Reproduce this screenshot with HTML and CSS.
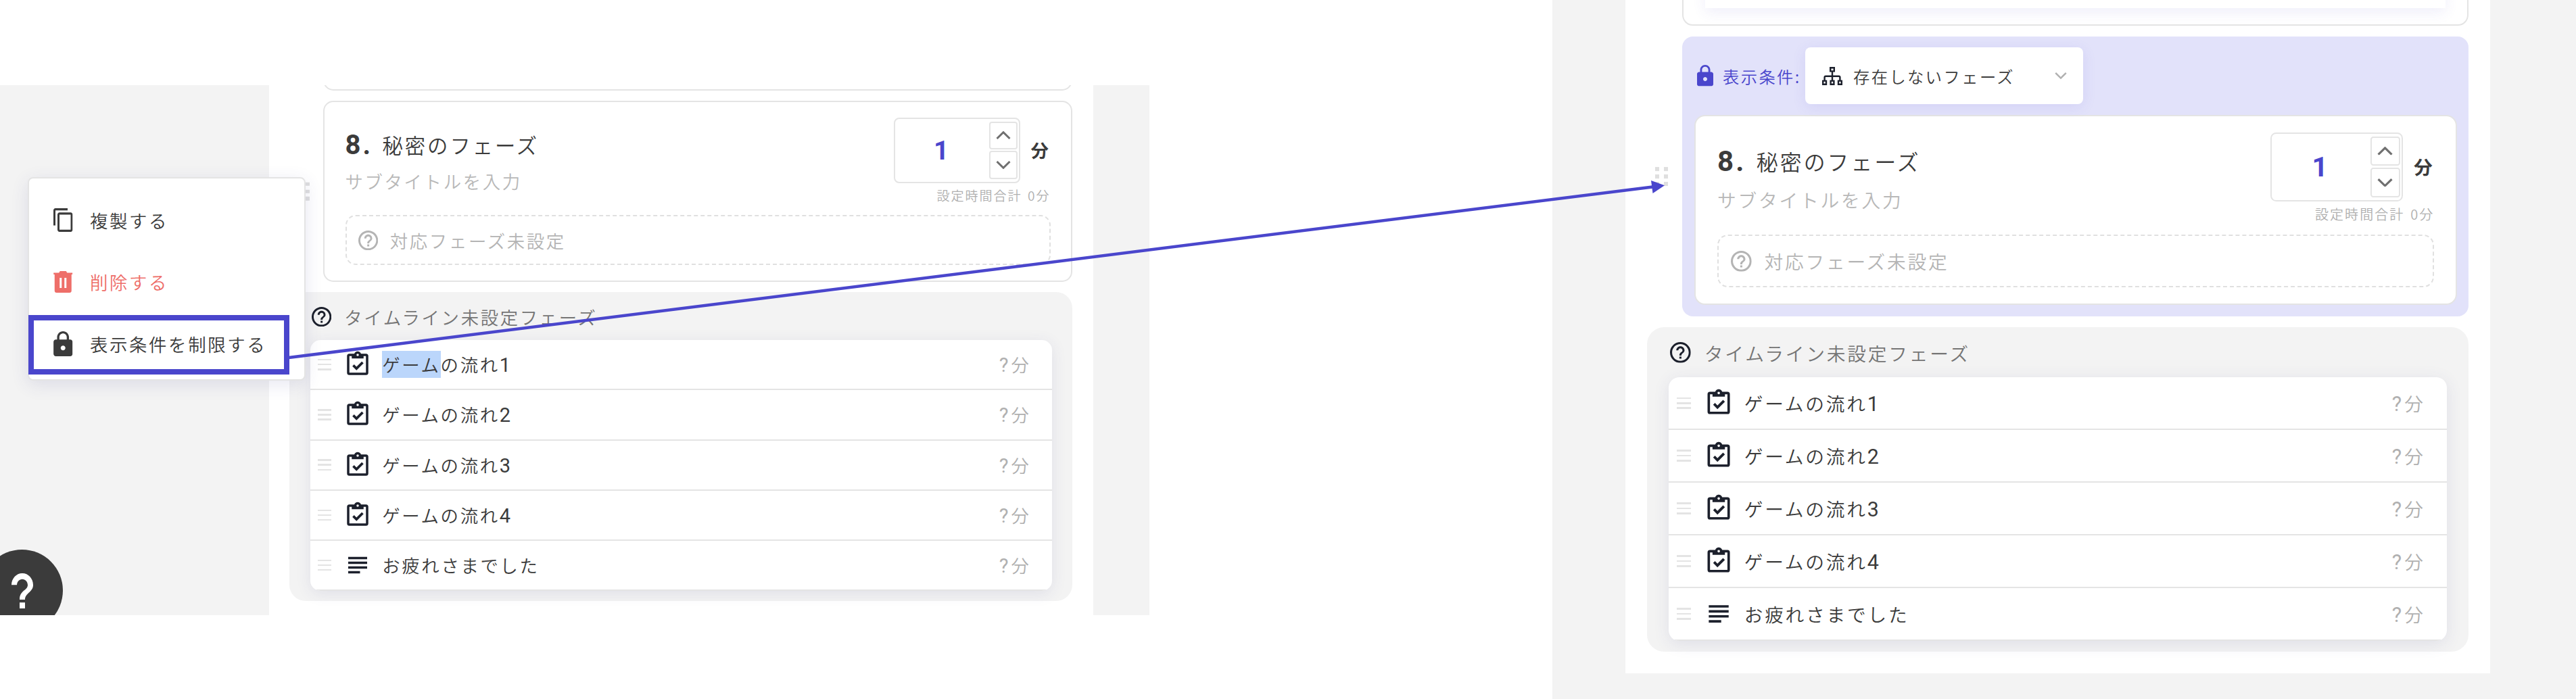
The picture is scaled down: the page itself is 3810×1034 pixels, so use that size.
FILE: index.html
```html
<!DOCTYPE html>
<html lang="ja">
<head>
<meta charset="utf-8">
<title>フェーズ編集</title>
<link rel="stylesheet" href="styles.css">
</head>
<body>
<svg class="defs" width="0" height="0">
  <symbol id="help" viewBox="2 2 20 20"><path d="M11 18h2v-2h-2v2zm1-16C6.48 2 2 6.48 2 12s4.48 10 10 10 10-4.48 10-10S17.52 2 12 2zm0 18c-4.41 0-8-3.59-8-8s3.59-8 8-8 8 3.59 8 8-3.59 8-8 8zm0-14c-2.21 0-4 1.79-4 4h2c0-1.1.9-2 2-2s2 .9 2 2c0 2-3 1.75-3 5h2c0-2.25 3-2.5 3-5 0-2.21-1.79-4-4-4z"/></symbol>
  <symbol id="question" viewBox="8 6 8 12" preserveAspectRatio="none"><path d="M11 18h2v-2h-2v2zm1-12c-2.21 0-4 1.79-4 4h2c0-1.1.9-2 2-2s2 .9 2 2c0 2-3 1.75-3 5h2c0-2.25 3-2.5 3-5 0-2.21-1.79-4-4-4z"/></symbol>
  <symbol id="task" viewBox="0 0 24 24"><path d="M19,3H14.82C14.4,1.84 13.3,1 12,1C10.7,1 9.6,1.84 9.18,3H5A2,2 0 0,0 3,5V19A2,2 0 0,0 5,21H19A2,2 0 0,0 21,19V5A2,2 0 0,0 19,3M12,3A1,1 0 0,1 13,4A1,1 0 0,1 12,5A1,1 0 0,1 11,4A1,1 0 0,1 12,3M7,7H17V5H19V19H5V5H7V7M7.5,13.5L9,12L11,14L15.5,9.5L17,11L11,17L7.5,13.5Z"/></symbol>
  <symbol id="text" viewBox="0 0 24 24"><path d="M14 17H4v2h10v-2zm6-8H4v2h16V9zM4 15h16v-2H4v2zM4 5v2h16V5H4z"/></symbol>
  <symbol id="lock" viewBox="4 1 16 21"><path d="M18 8h-1V6c0-2.76-2.24-5-5-5S7 3.24 7 6v2H6c-1.1 0-2 .9-2 2v10c0 1.1.9 2 2 2h12c1.1 0 2-.9 2-2V10c0-1.1-.9-2-2-2zm-6 9c-1.1 0-2-.9-2-2s.9-2 2-2 2 .9 2 2-.9 2-2 2zm3.1-9H8.9V6c0-1.71 1.39-3.1 3.1-3.1s3.1 1.39 3.1 3.1v2z"/></symbol>
  <symbol id="copy" viewBox="2 1 19 22" preserveAspectRatio="none"><path d="M16 1H4c-1.1 0-2 .9-2 2v14h2V3h12V1zm3 4H8c-1.1 0-2 .9-2 2v14c0 1.1.9 2 2 2h11c1.1 0 2-.9 2-2V7c0-1.100-.9-2-2-2zm0 16H8V7h11v14z"/></symbol>
  <symbol id="trash" viewBox="0 0 28 32"><path fill-rule="evenodd" d="M0 2.500h8L9.500 0h9L20 2.500h8V5h-1.500v24a3 3 0 0 1-3 3h-19a3 3 0 0 1-3-3V5H0zM9 10v15h3V10zm7 0v15h3V10z"/></symbol>
  <symbol id="up" viewBox="0 0 22 12"><path d="M1.500 11 11 1.700 20.500 11" fill="none" stroke="currentColor" stroke-width="3"/></symbol>
  <symbol id="down" viewBox="0 0 22 12"><path d="M1.500 1 11 10.300 20.500 1" fill="none" stroke="currentColor" stroke-width="3"/></symbol>
  <symbol id="tree" viewBox="0 0 30 27"><path fill="none" stroke="currentColor" stroke-width="2.400" d="M12.200 1.200h5.600v5.200h-5.600zM1.200 20.600h4.800v5.200H1.200zM12.600 20.600h4.800v5.200h-4.800zM24 20.600h4.800v5.200H24zM15 6.400v14.200M3.600 20.600v-5.200q0-1.700 1.700-1.700h19.400q1.700 0 1.700 1.700v5.200"/></symbol>
</svg>

<main class="board">
  <section class="screen screen-before">
    <div class="column">
      <div class="card card-previous"></div>
      <div class="slot">
        <div class="dots"><i></i><i></i><i></i><i></i><i></i><i></i></div>
        <article class="card phase">
          <div class="phase-top">
            <div class="phase-names">
              <h2><b>8.</b>秘密のフェーズ</h2>
              <p>サブタイトルを入力</p>
            </div>
            <div class="phase-time">
              <div class="time-row">
                <div class="stepper"><span>1</span><div class="steps"><div><svg><use href="#up"/></svg></div><div><svg><use href="#down"/></svg></div></div></div>
                <strong>分</strong>
              </div>
              <small>設定時間合計 0分</small>
            </div>
          </div>
          <div class="unset"><svg><use href="#help"/></svg>対応フェーズ未設定</div>
        </article>
      </div>
      <section class="group">
        <h3><svg><use href="#help"/></svg>タイムライン未設定フェーズ</h3>
        <ul>
          <li><div class="grip"><i></i><i></i><i></i></div><svg><use href="#task"/></svg><span><mark>ゲーム</mark>の流れ<b>1</b></span><em><b>?</b>分</em></li>
          <li><div class="grip"><i></i><i></i><i></i></div><svg><use href="#task"/></svg><span>ゲームの流れ<b>2</b></span><em><b>?</b>分</em></li>
          <li><div class="grip"><i></i><i></i><i></i></div><svg><use href="#task"/></svg><span>ゲームの流れ<b>3</b></span><em><b>?</b>分</em></li>
          <li><div class="grip"><i></i><i></i><i></i></div><svg><use href="#task"/></svg><span>ゲームの流れ<b>4</b></span><em><b>?</b>分</em></li>
          <li><div class="grip"><i></i><i></i><i></i></div><svg><use href="#text"/></svg><span>お疲れさまでした</span><em><b>?</b>分</em></li>
        </ul>
      </section>
    </div>
    <nav class="menu">
      <div class="item"><svg class="i-copy"><use href="#copy"/></svg>複製する</div>
      <div class="item danger"><svg class="i-trash"><use href="#trash"/></svg>削除する</div>
      <div class="item"><svg class="i-lock"><use href="#lock"/></svg>表示条件を制限する</div>
    </nav>
    <div class="help-button"><svg><use href="#question"/></svg></div>
  </section>

  <section class="screen screen-after">
    <div class="column">
      <div class="card card-previous"><div class="previous-body"></div></div>
      <div class="slot restricted">
        <div class="dots"><i></i><i></i><i></i><i></i><i></i><i></i></div>
        <div class="condition">
          <svg class="i-lock"><use href="#lock"/></svg><span>表示条件:</span>
          <div class="select"><svg class="i-tree"><use href="#tree"/></svg>存在しないフェーズ<svg class="i-down"><use href="#down"/></svg></div>
        </div>
        <article class="card phase">
          <div class="phase-top">
            <div class="phase-names">
              <h2><b>8.</b>秘密のフェーズ</h2>
              <p>サブタイトルを入力</p>
            </div>
            <div class="phase-time">
              <div class="time-row">
                <div class="stepper"><span>1</span><div class="steps"><div><svg><use href="#up"/></svg></div><div><svg><use href="#down"/></svg></div></div></div>
                <strong>分</strong>
              </div>
              <small>設定時間合計 0分</small>
            </div>
          </div>
          <div class="unset"><svg><use href="#help"/></svg>対応フェーズ未設定</div>
        </article>
      </div>
      <section class="group">
        <h3><svg><use href="#help"/></svg>タイムライン未設定フェーズ</h3>
        <ul>
          <li><div class="grip"><i></i><i></i><i></i></div><svg><use href="#task"/></svg><span>ゲームの流れ<b>1</b></span><em><b>?</b>分</em></li>
          <li><div class="grip"><i></i><i></i><i></i></div><svg><use href="#task"/></svg><span>ゲームの流れ<b>2</b></span><em><b>?</b>分</em></li>
          <li><div class="grip"><i></i><i></i><i></i></div><svg><use href="#task"/></svg><span>ゲームの流れ<b>3</b></span><em><b>?</b>分</em></li>
          <li><div class="grip"><i></i><i></i><i></i></div><svg><use href="#task"/></svg><span>ゲームの流れ<b>4</b></span><em><b>?</b>分</em></li>
          <li><div class="grip"><i></i><i></i><i></i></div><svg><use href="#text"/></svg><span>お疲れさまでした</span><em><b>?</b>分</em></li>
        </ul>
      </section>
    </div>
  </section>

  <div class="focus-box"></div>
  <svg class="arrow" viewBox="0 0 3810 1034"><path d="M427 529 2446 276.200" fill="none" stroke="#4a46cc" stroke-width="4.500"/><path d="M2442 267 2462 274.300 2444.500 286z" fill="#4a46cc"/></svg>
</main>
</body>
</html>
```
FILE: styles.css
```css
* { box-sizing: border-box; }
body {
  margin: 0;
  background: #fff;
  color: #3b3b3b;
  font-family: "Noto Sans CJK JP", sans-serif;
  font-weight: 350;
}
h2, h3, p, ul { margin: 0; padding: 0; font-weight: inherit; }
svg { display: block; fill: currentColor; flex: none; }
.defs { position: absolute; }

.board {
  position: relative;
  display: flex;
  align-items: flex-start;
  justify-content: space-between;
  width: 3810px;
  height: 1034px;
  overflow: hidden;
}

/* Both screens share one layout; --u is the size of its unit. */
.screen {
  position: relative;
  background: #f3f3f3;
  overflow: hidden;
  font-size: calc(26.400 * var(--u));
  letter-spacing: calc(2.640 * var(--u));
}
.screen-before { --u: 1px; width: 1700px; height: 784px; margin-top: 126px; padding-left: 398px; }
.screen-after { --u: 1.05px; width: 1514px; height: 1034px; padding-left: 108px; }
.column {
  width: calc(1218.500 * var(--u));
  padding: 0 calc(30.500 * var(--u)) 0 calc(30 * var(--u));
  background: #fff;
  overflow: hidden;
}
.screen-before .column { height: 784px; }
.screen-after .column { height: 996px; }

.card {
  background: #fff;
  border: 2px solid #e4e4e4;
  border-radius: calc(15 * var(--u));
}
.card-previous { margin-left: calc(50 * var(--u)); height: 60px; }
.screen-before .card-previous { margin-top: -52px; }
.screen-after .card-previous { margin-top: -22px; padding: 0 32px 24px; }
.previous-body { height: 100%; box-shadow: 0 6px 20px rgba(74, 70, 204, .09); }

.slot { position: relative; margin: calc(15.200 * var(--u)) 0 calc(15 * var(--u)) calc(50 * var(--u)); }
.dots {
  position: absolute;
  left: calc(-38 * var(--u));
  top: 50%;
  transform: translateY(-50%);
  display: grid;
  grid-template-columns: repeat(2, calc(5.300 * var(--u)));
  gap: calc(5.300 * var(--u)) calc(7.200 * var(--u));
}
.dots i { height: calc(5.300 * var(--u)); background: #dfdfdf; }

.phase { height: calc(268 * var(--u)); padding: calc(22.500 * var(--u)) calc(30.500 * var(--u)) 0; }
.phase-top { display: flex; justify-content: space-between; height: calc(144.500 * var(--u)); }
.phase-names { padding-top: calc(20.500 * var(--u)); }
.phase-names h2 {
  display: flex;
  height: calc(40 * var(--u));
  line-height: calc(40 * var(--u));
  font-size: calc(30.300 * var(--u));
  letter-spacing: calc(3 * var(--u));
}
.phase-names h2 b { width: calc(55 * var(--u)); font: 700 calc(40 * var(--u)) / calc(41 * var(--u)) Roboto, sans-serif; }
.phase-names p { margin-top: calc(14 * var(--u)); line-height: calc(40 * var(--u)); color: #b8b8b8; }
.phase-time { display: flex; flex-direction: column; align-items: flex-end; }
.time-row { display: flex; align-items: center; gap: calc(15.500 * var(--u)); }
.time-row strong { width: calc(29 * var(--u)); font-weight: 700; line-height: 1; letter-spacing: 0; }
.stepper {
  display: flex;
  width: calc(186.800 * var(--u));
  height: calc(97.300 * var(--u));
  padding: calc(4 * var(--u)) calc(2 * var(--u)) calc(4 * var(--u)) 0;
  border: 2px solid #e4e4e4;
  border-radius: calc(8 * var(--u));
}
.stepper span {
  flex: 1;
  text-align: center;
  color: #4a46cc;
  font: 700 calc(39 * var(--u)) / calc(86 * var(--u)) Roboto, sans-serif;
}
.steps { display: flex; flex-direction: column; justify-content: space-between; width: calc(42 * var(--u)); }
.steps div {
  display: flex;
  align-items: center;
  justify-content: center;
  height: calc(41.500 * var(--u));
  border: 2px solid #e4e4e4;
  border-radius: calc(4 * var(--u));
  color: #707070;
}
.steps svg { width: calc(22 * var(--u)); height: calc(12 * var(--u)); }
.phase-time small {
  margin-top: calc(6.300 * var(--u));
  font-size: calc(19.100 * var(--u));
  letter-spacing: calc(1.900 * var(--u));
  word-spacing: calc(2.500 * var(--u));
  line-height: calc(24 * var(--u));
  color: #b0b0b0;
}
.unset {
  display: flex;
  align-items: center;
  gap: calc(17.500 * var(--u));
  height: calc(74 * var(--u));
  padding-left: calc(17.500 * var(--u));
  border: 2px dashed #e0e0e0;
  border-radius: calc(15 * var(--u));
  color: #b4b4b4;
}
.unset svg, .group h3 svg { width: calc(29.300 * var(--u)); height: calc(29.300 * var(--u)); }

.restricted {
  height: 414px;
  padding: 16px 17px 0 18px;
  margin-top: 16px;
  border-radius: 16px;
  background: #e2e2fa;
}
.condition {
  display: flex;
  align-items: center;
  height: 84px;
  margin-bottom: 16px;
  padding-left: 4px;
  color: #4a46cc;
  font-size: 24.300px;
  letter-spacing: 2.400px;
}
.condition .i-lock { width: 24px; height: 31.500px; margin-right: 14px; }
.condition span { width: 122px; }
.select {
  display: flex;
  align-items: center;
  width: 411px;
  height: 84px;
  padding: 0 24px 0 25px;
  border-radius: 8px;
  background: #fff;
  box-shadow: 0 4px 20px rgba(74, 70, 204, .1);
  color: #3b3b3b;
}
.i-tree { width: 30px; height: 27px; margin-right: 16px; color: #1c202c; }
.i-down { width: 18px; height: 10px; margin-left: auto; color: #b0b0b0; }

.group {
  height: calc(457 * var(--u));
  padding: calc(11 * var(--u)) calc(30.500 * var(--u)) 0 calc(31 * var(--u));
  border-radius: calc(24 * var(--u));
  background: #f3f3f3;
}
.group h3 {
  display: flex;
  align-items: center;
  gap: calc(19 * var(--u));
  height: calc(50 * var(--u));
  margin-bottom: calc(10 * var(--u));
  padding-left: calc(2 * var(--u));
  font-size: inherit;
  color: #757575;
}
.group h3 svg, .group li > svg { color: #1c202c; }
.group ul {
  border-radius: calc(15 * var(--u));
  background: #fff;
  box-shadow: 0 calc(4 * var(--u)) calc(22 * var(--u)) rgba(60, 56, 140, .1);
  list-style: none;
  overflow: hidden;
}
.group li {
  display: flex;
  align-items: center;
  height: calc(74.200 * var(--u));
  padding: 0 calc(31 * var(--u)) 0 calc(11 * var(--u));
  border-bottom: 2px solid #e4e4e4;
}
.grip { display: flex; flex-direction: column; gap: calc(4.700 * var(--u)); width: calc(20 * var(--u)); }
.grip i { height: calc(2.400 * var(--u)); background: #e4e4e4; }
.group li > svg { width: calc(42 * var(--u)); height: calc(42 * var(--u)); margin: 0 calc(15 * var(--u)) 0 calc(18.300 * var(--u)); }
.group li span, .group li em { line-height: calc(40 * var(--u)); }
.group li b { font: 400 calc(29 * var(--u)) / 1 Roboto, sans-serif; letter-spacing: 0; }
.group li mark { display: inline-block; background: #bbd6fb; color: inherit; }
.group li em { margin-left: auto; font-style: normal; color: #b0b0b0; }
.group li em b { margin-right: calc(4 * var(--u)); }

.menu {
  position: absolute;
  left: 41px;
  top: 136px;
  width: 411px;
  height: 301px;
  padding: 16px 0 0 36px;
  border: 2px solid #e4e4e4;
  border-radius: 8px;
  background: #fff;
  box-shadow: 0 6px 26px rgba(60, 56, 140, .12);
}
.item { display: flex; align-items: center; height: 91.300px; gap: 25.500px; }
.danger { color: #ee6e69; }
.item svg { width: 28.500px; }
.i-copy { height: 35px; }
.i-trash { height: 32px; }
.item .i-lock { height: 37px; }
.help-button {
  position: absolute;
  left: -28px;
  top: 687px;
  display: flex;
  align-items: center;
  justify-content: center;
  width: 121px;
  height: 121px;
  border-radius: 50%;
  background: #3b3b3b;
  color: #fff;
}
.help-button svg { width: 32px; height: 52px; }

.focus-box { position: absolute; left: 42px; top: 466px; width: 386px; height: 88px; border: 8px solid #4a46cc; }
.arrow { position: absolute; left: 0; top: 0; width: 3810px; height: 1034px; }
```
